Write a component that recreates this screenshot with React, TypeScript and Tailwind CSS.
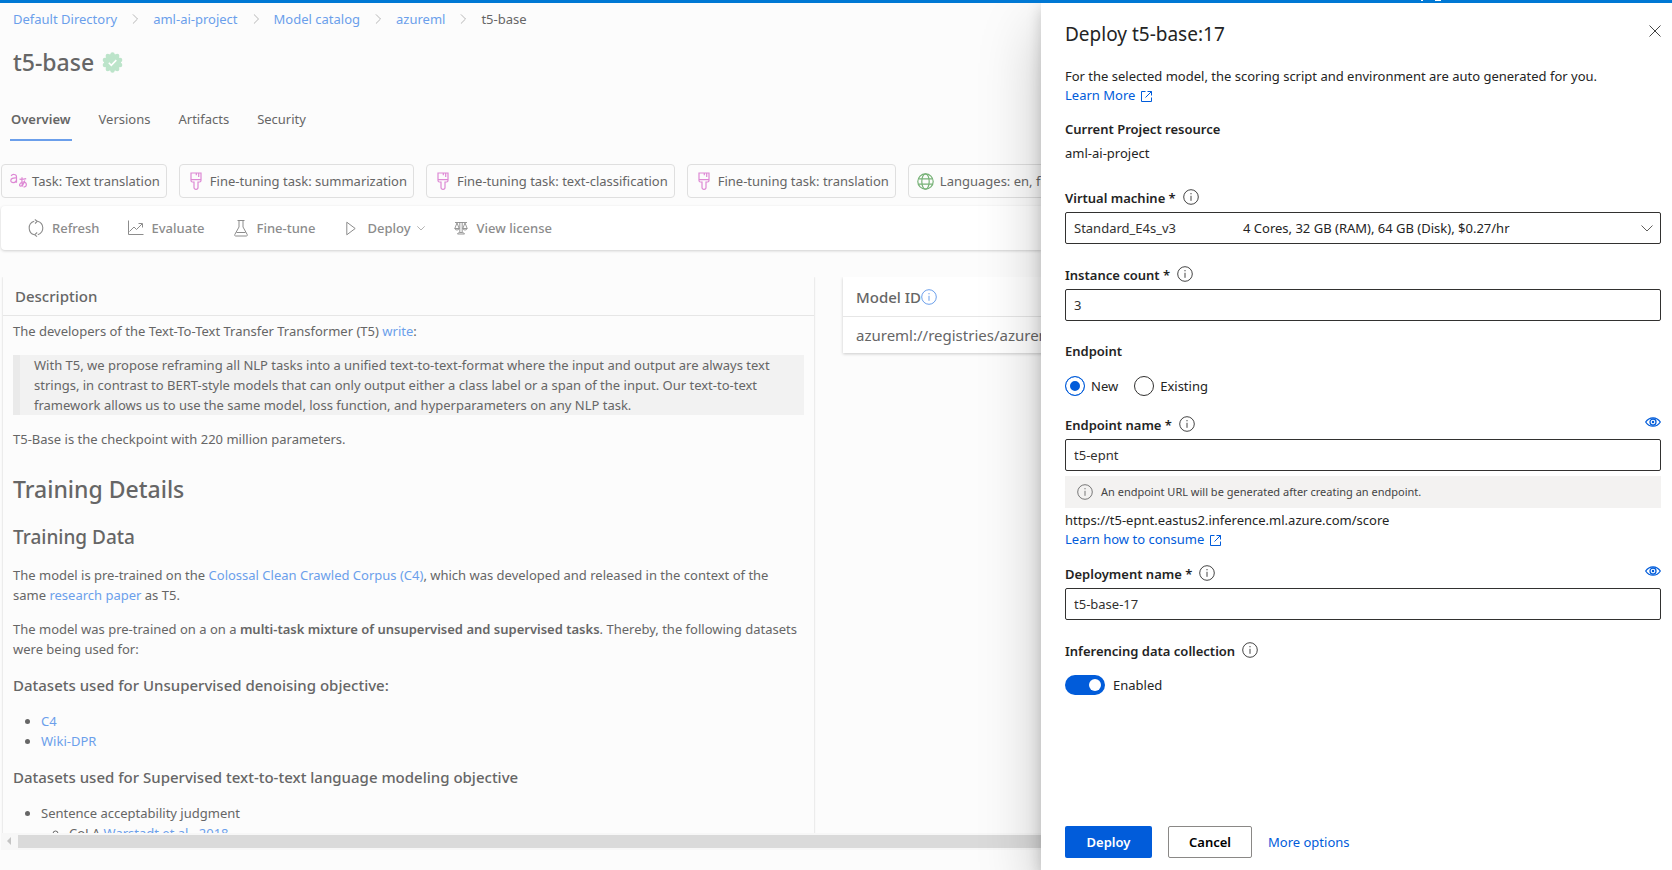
import { useState } from "react";
import type { ReactNode } from "react";

const tabs = ["Overview", "Versions", "Artifacts", "Security"];
const crumbs = ["Default Directory", "aml-ai-project", "Model catalog", "azureml"];

function TranslateIcon() {
  return (
    <svg width="18" height="16" viewBox="0 0 18 16" fill="none" stroke="#dd88d4" strokeWidth="1.2" className="shrink-0">
      <path d="M1.2 3C2 1 6.500.6 6.500 4V9.800M6.500 5C3 4.700.8 5.500.8 7.500c0 2.800 4.500 2.800 5.700-.3" />
      <path d="M9.500 6.200c2 .3 4.500 0 6.700-.6M12 4.200c-.4 3.300-.3 6.500.8 9.300M14.800 7.500c-.8 3.300-2.900 5.700-4.300 5.700-1.600 0-1.300-3.900 2.700-4.200 4-.2 4.300 4.700.4 5.200" />
    </svg>
  );
}

function BrushIcon() {
  return (
    <svg width="12" height="18" viewBox="0 0 12 18" fill="none" stroke="#dd88d4" strokeWidth="1.2" className="shrink-0">
      <path d="M1 1h10v7.500c0 1-.5 1.500-1.500 1.500H8v5.500a2 1.800 0 0 1-4 0V10H2.500C1.500 10 1 9.500 1 8.500zM1 7.700h10M6.300 1v2.200M8.700 1v4" />
    </svg>
  );
}

function GlobeIcon() {
  return (
    <svg width="17" height="17" viewBox="0 0 17 17" fill="none" stroke="#77b277" strokeWidth="1.200" className="shrink-0">
      <circle cx="8.500" cy="8.500" r="7.700" />
      <ellipse cx="8.500" cy="8.500" rx="3.700" ry="7.700" />
      <path d="M1.500 5.800h14M1.500 11.200h14" />
    </svg>
  );
}

function RefreshIcon() {
  return (
    <svg width="16" height="18" viewBox="0 0 16 18" fill="none" stroke="#8c8c8c" strokeWidth="1.100">
      <path d="M9.500 2.200A7 7 0 0 1 9.800 15.700M6.500 15.800A7 7 0 0 1 6.200 2.300" />
      <path d="M6.800.5 9.300 2.300 7 4.500M9.200 13.500 6.700 15.700 9 17.600" />
    </svg>
  );
}

function ChartIcon() {
  return (
    <svg width="16" height="16" viewBox="0 0 16 16" fill="none" stroke="#8c8c8c" strokeWidth="1">
      <path d="M.5.5v14h15M1.500 11.500 6 7l2.500 2.500L14 4M10.500 3.500h4v4" />
    </svg>
  );
}

function FlaskIcon() {
  return (
    <svg width="14" height="17" viewBox="0 0 14 17" fill="none" stroke="#8c8c8c" strokeWidth="1">
      <path d="M3.500.5h7M5 .5v6.500L.8 14.500c-.3.900 0 1.500.8 1.500h10.800c.8 0 1.100-.6.8-1.500L9 7V.5M2.500 12.500h9" />
    </svg>
  );
}

function PlayIcon() {
  return (
    <svg width="10" height="15" viewBox="0 0 10 15" fill="none" stroke="#8c8c8c" strokeWidth="1">
      <path d="M.8 1.200v12.600L9.200 7.500z" />
    </svg>
  );
}

function ScalesIcon() {
  return (
    <svg width="14" height="14" viewBox="0 0 14 14" fill="none" stroke="#8c8c8c" strokeWidth=".9">
      <path d="M1 1.500h12M5.800 1v10.500M8.200 1v10.500M3 2 .8 7.500h4.400zM11 2 8.800 7.500h4.400zM.8 7.500c.3 2 4.100 2 4.400 0M8.800 7.500c.3 2 4.100 2 4.400 0M3.500 13c0-2 7-2 7 0z" />
    </svg>
  );
}

function Chevron({ className, right }: { className: string; right?: boolean }) {
  return (
    <svg viewBox="0 0 12 12" fill="none" stroke="currentColor" className={className}>
      <path d={right ? "M3.500.5 9 6l-5.500 5.500" : "M.5 3.500 6 9l5.500-5.500"} />
    </svg>
  );
}

function InfoIcon({ className = "text-[#444]" }: { className?: string }) {
  return (
    <svg width="16" height="16" viewBox="0 0 16 16" fill="none" stroke="currentColor" className={`shrink-0 ${className}`}>
      <circle cx="8" cy="8" r="7.300" />
      <path d="M8 6.800v5M8 4v1.300" />
    </svg>
  );
}

function EyeIcon() {
  return (
    <svg width="16" height="10" viewBox="0 0 16 10" fill="none" stroke="#015cda" strokeWidth="1.300">
      <path d="M.7 5C2.500 2.200 5 .8 8 .8S13.500 2.200 15.300 5C13.500 7.800 11 9.200 8 9.200S2.500 7.800.7 5z" />
      <circle cx="8" cy="5" r="3" />
      <circle cx="8" cy="5" r=".6" />
    </svg>
  );
}

function ExternalIcon() {
  return (
    <svg width="11" height="11" viewBox="0 0 11 11" fill="none" stroke="currentColor" className="ml-1.5 inline-block">
      <path d="M4.500.5h-4v10h10v-4M6.500.5h4v4M10.500.5l-6 6" />
    </svg>
  );
}

function VerifiedIcon() {
  const bumps = Array.from({ length: 10 }, (_, i) => (i * Math.PI) / 5);

  return (
    <svg width="21" height="21" viewBox="0 0 21 21" fill="#bce4ca">
      <circle cx="10.5" cy="10.5" r="8.500" />
      {bumps.map((a) => (
        <circle key={a} cx={10.5 + 8 * Math.sin(a)} cy={10.5 - 8 * Math.cos(a)} r="2.200" />
      ))}
      <path d="m6.800 10.800 2.500 2.500 5-5.200" fill="none" stroke="#fff" strokeWidth="1.600" />
    </svg>
  );
}

function Link({ children }: { children: ReactNode }) {
  return (
    <a href="#" className="text-[#6b9feb]">
      {children}
    </a>
  );
}

function Chip({ icon, children }: { icon: ReactNode; children: ReactNode }) {
  return (
    <span className="flex h-[34px] shrink-0 items-center rounded border border-[#dfdfdf] pr-1.5 pl-2 whitespace-nowrap">
      {icon}
      {children}
    </span>
  );
}

function Command({ icon, children }: { icon: ReactNode; children: ReactNode }) {
  return (
    <button className="flex items-center gap-2 font-medium whitespace-nowrap text-[#8c8c8c]">
      <span className="flex w-4 justify-center">{icon}</span>
      {children}
    </button>
  );
}

function FieldLabel({ htmlFor, children, preview }: { htmlFor: string; children: ReactNode; preview?: boolean }) {
  return (
    <div className="flex h-7 items-center justify-between">
      <div className="flex items-center gap-[7px]">
        <label htmlFor={htmlFor} className="pt-0.5 font-semibold">
          {children}
        </label>
        <InfoIcon />
      </div>
      {preview && (
        <button aria-label="Preview" className="pb-1">
          <EyeIcon />
        </button>
      )}
    </div>
  );
}

const fieldClass = "block h-8 w-full rounded-xs border border-[#323130] bg-white px-2 text-[#323130] outline-none";

function ModelPage() {
  return (
    <main className="flex min-w-0 flex-1 flex-col overflow-hidden bg-[#fcfcfc] text-[#666]">
      <nav aria-label="Breadcrumb" className="mt-1.5 flex h-5 items-center pl-[13px] whitespace-nowrap">
        {crumbs.map((crumb) => (
          <span key={crumb} className="flex items-center">
            <Link>{crumb}</Link>
            <Chevron right className="mx-[13px] size-[10px] text-[#aaa]" />
          </span>
        ))}
        <span>t5-base</span>
      </nav>

      <div className="mt-[17px] flex h-8 items-center gap-2 pl-[13px]">
        <h1 className="text-[23px] font-medium">t5-base</h1>
        <VerifiedIcon />
      </div>

      <div role="tablist" className="mt-[22px] flex gap-[26px] pl-[10px]">
        {tabs.map((tab, i) => (
          <button
            key={tab}
            role="tab"
            aria-selected={i === 0}
            className={i === 0 ? "h-[41px] border-b-2 border-[#6b9feb] px-px pb-0.5 font-semibold" : "h-[41px] border-b-2 border-transparent px-px pb-0.5"}>
            {tab}
          </button>
        ))}
      </div>

      <div className="mt-[23px] flex gap-3 pl-px">
        <Chip icon={<TranslateIcon />}>
          <span className="ml-1">Task: Text translation</span>
        </Chip>
        {["summarization", "text-classification", "translation"].map((task) => (
          <Chip key={task} icon={<span className="pl-0.5"><BrushIcon /></span>}>
            <span className="ml-2">Fine-tuning task: {task}</span>
          </Chip>
        ))}
        <Chip icon={<GlobeIcon />}>
          <span className="ml-1.5">Languages: en, fr, ro, de</span>
        </Chip>
      </div>

      <div role="toolbar" className="mt-2 ml-px flex h-[44px] shrink-0 items-center gap-[28px] rounded-l bg-white pl-[27px] shadow-[0_1px_3px_rgba(0,0,0,0.18)]">
        <Command icon={<RefreshIcon />}>Refresh</Command>
        <Command icon={<ChartIcon />}>Evaluate</Command>
        <Command icon={<FlaskIcon />}>Fine-tune</Command>
        <Command icon={<PlayIcon />}>
          <span className="flex items-center gap-1.5">
            Deploy
            <Chevron className="size-2" />
          </span>
        </Command>
        <Command icon={<ScalesIcon />}>View license</Command>
      </div>

      <div className="mt-[27px] flex min-h-0 flex-1 items-start gap-[29px] overflow-hidden pl-[3px]">
        <section className="w-[811px] shrink-0 shadow-[0_0_2px_rgba(0,0,0,0.2)]">
          <h2 className="flex h-[39px] items-center border-b border-[#e6e6e6] pl-3 text-[15px] font-medium">Description</h2>
          <div className="px-[10px] pt-[5px]">
            <p>
              The developers of the Text-To-Text Transfer Transformer (T5) <Link>write</Link>:
            </p>
            <blockquote className="mt-[14px] border-l-[7px] border-[#eaeaea] bg-[#f2f2f2] pl-[14px]">
              With T5, we propose reframing all NLP tasks into a unified text-to-text-format where the input and output are always text
              strings, in contrast to BERT-style models that can only output either a class label or a span of the input. Our text-to-text
              framework allows us to use the same model, loss function, and hyperparameters on any NLP task.
            </blockquote>
            <p className="mt-[14px]">T5-Base is the checkpoint with 220 million parameters.</p>
            <h2 className="mt-6 text-[23px] leading-8 font-medium">Training Details</h2>
            <h3 className="mt-[18px] text-[19px] leading-7 font-medium">Training Data</h3>
            <p className="mt-[14px]">
              The model is pre-trained on the <Link>Colossal Clean Crawled Corpus (C4)</Link>, which was developed and released in the
              context of the
              <br />
              same <Link>research paper</Link> as T5.
            </p>
            <p className="mt-[14px]">
              The model was pre-trained on a on a <strong className="font-semibold">multi-task mixture of unsupervised and supervised tasks</strong>.
              Thereby, the following datasets were being used for:
            </p>
            <h4 className="mt-[14px] text-[15px] leading-6 font-medium">Datasets used for Unsupervised denoising objective:</h4>
            <ul className="mt-[14px] list-disc pl-7">
              <li><Link>C4</Link></li>
              <li><Link>Wiki-DPR</Link></li>
            </ul>
            <h4 className="mt-[14px] text-[15px] leading-6 font-medium">Datasets used for Supervised text-to-text language modeling objective</h4>
            <ul className="mt-[14px] list-disc pl-7">
              <li>
                Sentence acceptability judgment
                <ul className="list-[circle] pl-7">
                  <li>CoLA <Link>Warstadt et al., 2018</Link></li>
                </ul>
              </li>
            </ul>
          </div>
        </section>

        <section className="w-[400px] shrink-0 bg-white whitespace-nowrap shadow-[0_1px_3px_rgba(0,0,0,0.2)]">
          <h2 className="flex h-10 items-center border-b border-[#e6e6e6] pl-[13px] text-[15px] font-medium">
            Model ID
            <InfoIcon className="text-[#6b9feb]" />
          </h2>
          <p className="py-2 pl-[13px] text-[15px]">azureml://registries/azureml/models/t5-base/versions/17</p>
        </section>
      </div>

      <div className="mb-5 ml-px flex h-[17px] shrink-0 items-center bg-[#f7f7f7]">
        <svg width="17" height="9" viewBox="0 0 17 9" fill="#c4c4c4">
          <path d="M10 0v8L6 4z" />
        </svg>
        <div className="h-[13px] flex-1 bg-[#dadada]" />
      </div>
    </main>
  );
}

function DeployPanel() {
  const [endpointType, setEndpointType] = useState("New");
  const [collect, setCollect] = useState(true);

  return (
    <aside className="z-10 flex w-[631px] shrink-0 flex-col bg-white pr-[11px] pl-6 text-[#242424] shadow-[0_26px_58px_rgba(0,0,0,0.22),0_5px_14px_rgba(0,0,0,0.18)]">
      <div className="flex items-start justify-between">
        <h2 className="mt-[17px] text-[19px] leading-7">Deploy t5-base:17</h2>
        <button aria-label="Close" className="mt-[22px]">
          <svg width="12" height="12" viewBox="0 0 12 12" stroke="#444" fill="none">
            <path d="m.5.5 11 11M11.500.5l-11 11" />
          </svg>
        </button>
      </div>
      <p className="mt-[19px] leading-[19px]">
        For the selected model, the scoring script and environment are auto generated for you.
        <br />
        <a href="#" className="text-[#015cda]">
          Learn More
          <ExternalIcon />
        </a>
      </p>
      <h3 className="mt-[14px] font-semibold">Current Project resource</h3>
      <p className="mt-1">aml-ai-project</p>

      <div className="mt-5">
        <FieldLabel htmlFor="vm">Virtual machine *</FieldLabel>
        <div className="relative mt-px">
          <select id="vm" className={`${fieldClass} appearance-none`}>
            <option>Standard_E4s_v3</option>
          </select>
          <span className="pointer-events-none absolute inset-y-0 right-2 left-[178px] flex items-center justify-between">
            4 Cores, 32 GB (RAM), 64 GB (Disk), $0.27/hr
            <Chevron className="size-3 text-[#605e5c]" />
          </span>
        </div>
      </div>

      <div className="mt-4">
        <FieldLabel htmlFor="count">Instance count *</FieldLabel>
        <input id="count" defaultValue="3" className={`${fieldClass} mt-px`} />
      </div>

      <fieldset className="mt-5">
        <legend className="font-semibold">Endpoint</legend>
        <div className="mt-[15px] flex gap-4">
          {["New", "Existing"].map((type) => (
            <label key={type} className="flex items-center gap-1.5">
              <input
                type="radio"
                name="endpoint"
                checked={endpointType === type}
                onChange={() => setEndpointType(type)}
                className="size-5 appearance-none rounded-full border border-[#323130] checked:border-[#015cda] checked:bg-[#015cda] checked:shadow-[inset_0_0_0_4px_white]"
              />
              {type}
            </label>
          ))}
        </div>
      </fieldset>

      <div className="mt-[14px]">
        <FieldLabel htmlFor="endpoint-name" preview>Endpoint name *</FieldLabel>
        <input id="endpoint-name" defaultValue="t5-epnt" className={`${fieldClass} mt-px`} />
        <div className="mt-[5px] flex h-8 items-center gap-2 bg-[#f3f2f1] pl-3 text-[11px] text-[#444]">
          <InfoIcon className="text-[#777]" />
          An endpoint URL will be generated after creating an endpoint.
        </div>
        <p className="mt-[3px] leading-[19px]">
          https://t5-epnt.eastus2.inference.ml.azure.com/score
          <br />
          <a href="#" className="text-[#015cda]">
            Learn how to consume
            <ExternalIcon />
          </a>
        </p>
      </div>

      <div className="mt-[10px]">
        <FieldLabel htmlFor="deployment-name" preview>Deployment name *</FieldLabel>
        <input id="deployment-name" defaultValue="t5-base-17" className={`${fieldClass} mt-px`} />
      </div>

      <div className="mt-4">
        <FieldLabel htmlFor="collection">Inferencing data collection</FieldLabel>
        <div className="mt-[11px] flex items-center gap-2">
          <button
            id="collection"
            role="switch"
            aria-checked={collect}
            onClick={() => setCollect(!collect)}
            className={`flex h-5 w-10 items-center rounded-full bg-[#015cda] px-1 ${collect ? "justify-end" : "justify-start"}`}>
            <span className="size-3 rounded-full bg-white" />
          </button>
          <span>{collect ? "Enabled" : "Disabled"}</span>
        </div>
      </div>

      <div className="mt-auto mb-3 flex items-center gap-4">
        <button className="h-8 w-[87px] rounded-xs bg-[#015cda] font-semibold text-white">Deploy</button>
        <button className="h-8 w-[84px] rounded-xs border border-[#8a8886] font-semibold text-black">Cancel</button>
        <button className="text-[#015cda]">More options</button>
      </div>
    </aside>
  );
}

export default function App() {
  return (
    <div className="flex h-screen flex-col overflow-hidden bg-white font-['Noto_Sans','Open_Sans',sans-serif] text-[13px] leading-5">
      <header className="z-20 flex h-[3px] shrink-0 items-start justify-end gap-3 bg-[#0078d4] pr-[231px]">
        <span className="h-px w-0.5 bg-white" />
        <span className="h-px w-1.5 bg-white" />
      </header>
      <div className="flex min-h-0 flex-1">
        <ModelPage />
        <DeployPanel />
      </div>
    </div>
  );
}
